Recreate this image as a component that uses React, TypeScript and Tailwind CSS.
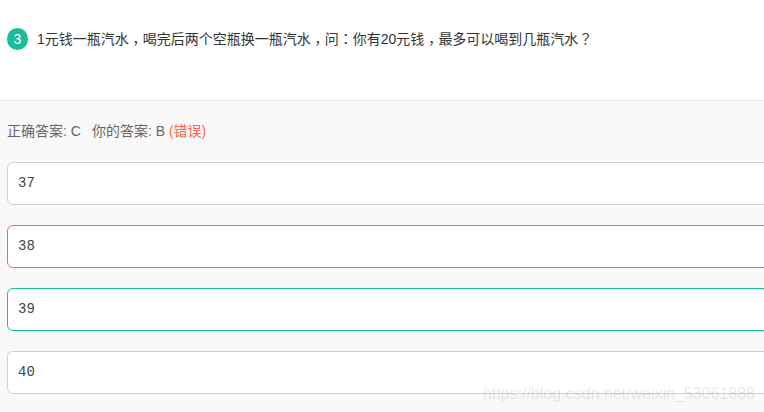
const options = [
  { value: '37', border: 'border-[#d0d0d0]' },
  { value: '38', border: 'border-[#ff6547]' },
  { value: '39', border: 'border-[#1abc9c]' },
  { value: '40', border: 'border-[#d0d0d0]' },
];

/* Full-width punctuation, set in the middle of its cell. */
function Comma() {
  return <span className="inline-block align-[-4px] font-['Noto_Sans_CJK_TC',sans-serif] leading-none">，</span>;
}

function Mark({ children }: { children: string }) {
  return <span className="font-['Noto_Sans_CJK_TC',sans-serif] leading-none">{children}</span>;
}

function Question() {
  return (
    <header className="flex h-[101px] items-start border-b border-[#e8e8e8] bg-white pl-[7px] pt-[27px]">
      <span className="mt-px flex h-[22px] w-[21px] shrink-0 items-center justify-center rounded-full bg-[#1abc9c] text-sm text-white">
        3
      </span>
      <h1 className="ml-[9px] whitespace-nowrap pt-px text-sm leading-[22px] text-[#333]">
        1元钱一瓶汽水<Comma />喝完后两个空瓶换一瓶汽水<Comma />问<Mark>：</Mark>你有20元钱<Comma />最多可以喝到几瓶汽水<Mark>？</Mark>
      </h1>
    </header>
  );
}

function AnswerSummary() {
  return (
    <p className="flex h-5 whitespace-pre text-sm leading-5 text-[#666]">
      <span>正确答案: C</span>
      <span className="ml-[11px]">你的答案: B </span>
      <span className="text-[#ff6547]">(错误)</span>
    </p>
  );
}

export default function App() {
  return (
    <div className="relative h-[412px] w-full overflow-hidden bg-[#f9f9f9] font-['Liberation_Sans','Noto_Sans_CJK_SC',sans-serif]">
      <Question />
      <main className="pl-[7px] pt-5">
        <AnswerSummary />
        <ul className="-mr-2 mt-[21px] flex flex-col gap-5">
          {options.map(({ value, border }) => (
            <li
              key={value}
              className={`h-[43px] rounded-md border bg-white pl-2.5 font-['Liberation_Mono',monospace] text-sm leading-[41px] text-[#444] ${border}`}
            >
              {value}
            </li>
          ))}
        </ul>
      </main>
      <span className="absolute bottom-[7px] right-[9px] text-base leading-[22px] text-black/10">
        https://blog.csdn.net/weixin_53061888
      </span>
    </div>
  );
}
